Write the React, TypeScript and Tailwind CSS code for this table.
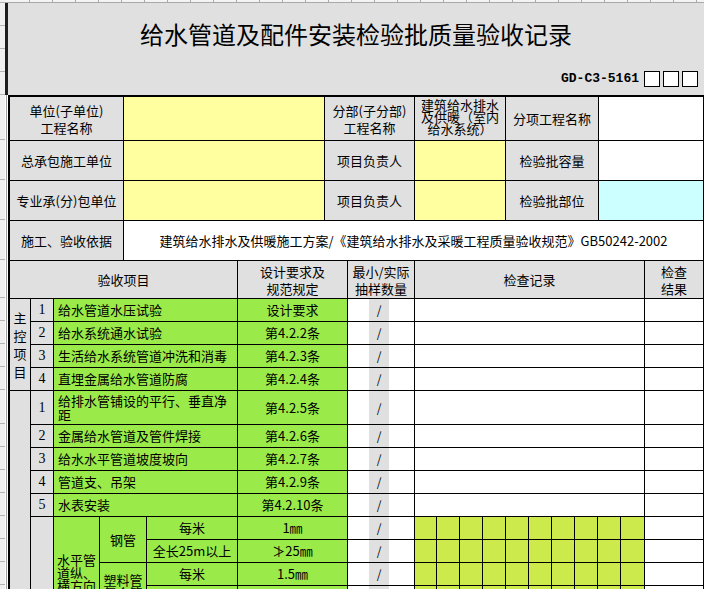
import React from "react";

const cell = "border-r border-b border-black flex items-center justify-center text-center";
const grey = "bg-[#e0e0e0]";
const yellow = "bg-[#ffffa0]";
const green = "bg-[#9aea4a]";

const stripRows = [
  "h-[3px]", "h-[23px]", "h-[23px]", "h-[23px]", "h-[23px]",
  "h-[45px]", "h-[40px]", "h-[40px]", "h-[40px]", "h-[38px]",
  "h-[23px]", "h-[23px]", "h-[23px]", "h-[23px]", "h-[34px]",
  "h-[23px]", "h-[23px]", "h-[23px]", "h-[23px]", "h-[23px]",
  "h-[23px]", "h-[23px]", "h-[23px]",
];

const mainRows = [
  ["1", "给水管道水压试验", "设计要求"],
  ["2", "给水系统通水试验", "第4.2.2条"],
  ["3", "生活给水系统管道冲洗和消毒", "第4.2.3条"],
  ["4", "直埋金属给水管道防腐", "第4.2.4条"],
];

const generalRows = [
  ["1", "给排水管铺设的平行、垂直净距", "第4.2.5条"],
  ["2", "金属给水管道及管件焊接", "第4.2.6条"],
  ["3", "给水水平管道坡度坡向", "第4.2.7条"],
  ["4", "管道支、吊架", "第4.2.9条"],
  ["5", "水表安装", "第4.2.10条"],
];

const pipes = [
  { name: "钢管", rows: [["每米", "1㎜"], ["全长25m以上", "≯25㎜"]] },
  { name: "塑料管复合管", rows: [["每米", "1.5㎜"], ["全长25m以上", "≯25㎜"]] },
  { name: "铸铁管", rows: [["每米", "2㎜"], ["全长25m以上", "≯25㎜"]] },
];

function Sample() {
  return (
    <div className="border-r border-b border-black flex">
      <div className="w-[21px]" />
      <div className="w-[20px] bg-[#e0e0e0] flex items-center justify-center text-[12px]">/</div>
      <div className="flex-1" />
    </div>
  );
}

function GreenGrid() {
  return (
    <>
      {Array.from({ length: 10 }).map((_, i) => (
        <div key={i} className="border-r border-b border-black bg-[#cdea4c]" />
      ))}
    </>
  );
}

function ItemRow({ row, tall }: { row: string[]; tall?: boolean }) {
  return (
    <>
      <div className={`${cell} ${grey} font-['Liberation_Serif',serif] text-[14px]`}>{row[0]}</div>
      <div
        className={`col-span-3 border-r border-b border-black flex items-center pl-[4px] text-left ${green} ${
          tall ? "leading-[14px]" : ""
        }`}
      >
        {row[1]}
      </div>
      <div className={`${cell} ${green}`}>{row[2]}</div>
      <Sample />
      <div className="col-span-10 border-r border-b border-black bg-white" />
      <div className="border-r border-b border-black bg-white" />
    </>
  );
}

export default function App() {
  return (
    <div className="flex h-[589px] w-[704px] overflow-hidden bg-white text-[13px] leading-[16px] text-black font-['Noto_Sans_CJK_SC',sans-serif]">
      {/* row headers of the sheet */}
      <div className="flex w-[5px] shrink-0 flex-col bg-[#f0f0f0]">
        {stripRows.map((h, i) => (
          <div key={i} className={`${h} shrink-0 border-b border-[#b4b4b4]`} />
        ))}
      </div>

      <div className="flex min-w-0 flex-1 flex-col">
        {/* column header edge */}
        <div className="flex h-[3px] shrink-0 border-b border-[#a8a8a8] bg-[#f4f4f4]">
          <div className="w-[25px] shrink-0 border-r border-[#a8a8a8]" />
          {Array.from({ length: 30 }).map((_, i) => (
            <div key={i} className="w-[23px] shrink-0 border-r border-[#a8a8a8]" />
          ))}
        </div>

        {/* title */}
        <div className="flex h-[92px] shrink-0 flex-col border-l-[3px] border-[#1e1e1e] bg-[#e0e0e0]">
          <div className="flex h-[62px] items-center justify-center text-[24px] leading-[30px]">
            给水管道及配件安装检验批质量验收记录
          </div>
          <div className="flex h-[27px] items-center justify-end gap-[3px] pr-[6px]">
            <span className="mr-[2px] font-['Liberation_Mono',monospace] text-[13px] font-bold">GD-C3-5161</span>
            <div className="h-[16px] w-[16px] border border-black bg-white" />
            <div className="h-[16px] w-[16px] border border-black bg-white" />
            <div className="h-[16px] w-[16px] border border-black bg-white" />
          </div>
        </div>

        <div className="flex flex-1">
          <div className="w-[3px] shrink-0 pl-[1px]">
            <div className="h-full border-l border-[#a0a0a0]" />
          </div>

          <div className="flex flex-1 flex-col border-l-2 border-t-2 border-black">
            {/* project info */}
            <div className="grid grid-cols-[114px_201px_90px_91px_93px_1fr] grid-rows-[44px_40px_40px_40px]">
              <div className={`${cell} ${grey} leading-[17px]`}>
                单位(子单位)
                <br />
                工程名称
              </div>
              <div className={`${cell} ${yellow}`} />
              <div className={`${cell} ${grey} leading-[17px]`}>
                分部(子分部)
                <br />
                工程名称
              </div>
              <div className={`${cell} ${grey} pb-[4px] leading-[12px]`}>建筑给水排水及供暖（室内给水系统）</div>
              <div className={`${cell} ${grey}`}>分项工程名称</div>
              <div className={`${cell} bg-white`} />

              <div className={`${cell} ${grey}`}>总承包施工单位</div>
              <div className={`${cell} ${yellow}`} />
              <div className={`${cell} ${grey}`}>项目负责人</div>
              <div className={`${cell} ${yellow}`} />
              <div className={`${cell} ${grey}`}>检验批容量</div>
              <div className={`${cell} bg-white`} />

              <div className={`${cell} ${grey}`}>专业承(分)包单位</div>
              <div className={`${cell} ${yellow}`} />
              <div className={`${cell} ${grey}`}>项目负责人</div>
              <div className={`${cell} ${yellow}`} />
              <div className={`${cell} ${grey}`}>检验批部位</div>
              <div className={`${cell} bg-[#ccffff]`} />

              <div className={`${cell} ${grey}`}>施工、验收依据</div>
              <div className={`${cell} col-span-5 bg-white`}>
                建筑给水排水及供暖施工方案/《建筑给水排水及采暖工程质量验收规范》GB50242-2002
              </div>
            </div>

            {/* inspection items */}
            <div className="grid grid-cols-[21px_23px_46px_47px_91px_110px_67px_22px_23px_23px_23px_23px_23px_23px_23px_23px_24px_1fr] grid-rows-[38px_23px_23px_23px_23px_34px_23px_23px_23px_23px_23px_23px_23px_23px_23px_23px]">
              <div className={`${cell} ${grey} col-span-5`}>验收项目</div>
              <div className={`${cell} ${grey} leading-[17px]`}>
                设计要求及
                <br />
                规范规定
              </div>
              <div className={`${cell} ${grey} leading-[17px]`}>
                最小/实际
                <br />
                抽样数量
              </div>
              <div className={`${cell} ${grey} col-span-10`}>检查记录</div>
              <div className={`${cell} ${grey} leading-[17px]`}>
                检查
                <br />
                结果
              </div>

              <div className={`${cell} ${grey} row-span-4 leading-[18px]`}>主控项目</div>
              {mainRows.map((r) => (
                <ItemRow key={"m" + r[0]} row={r} />
              ))}

              <div className={`${cell} ${grey} row-span-11`} />
              {generalRows.map((r, i) => (
                <ItemRow key={"g" + r[0]} row={r} tall={i === 0} />
              ))}

              <div className={`${cell} ${grey} row-span-6`} />
              <div className={`${cell} ${green} row-span-6 px-[3px] leading-[13px]`}>水平管道纵、横方向弯曲允许偏差</div>
              {pipes.map((p) => (
                <React.Fragment key={p.name}>
                  <div className={`${cell} ${green} row-span-2 px-[3px] leading-[13px]`}>{p.name}</div>
                  {p.rows.map((r, j) => (
                    <React.Fragment key={j}>
                      <div className={`${cell} ${green}`}>{r[0]}</div>
                      <div className={`${cell} ${green}`}>{r[1]}</div>
                      <Sample />
                      <GreenGrid />
                      <div className="border-r border-b border-black bg-white" />
                    </React.Fragment>
                  ))}
                </React.Fragment>
              ))}
            </div>
          </div>
        </div>
      </div>
    </div>
  );
}
